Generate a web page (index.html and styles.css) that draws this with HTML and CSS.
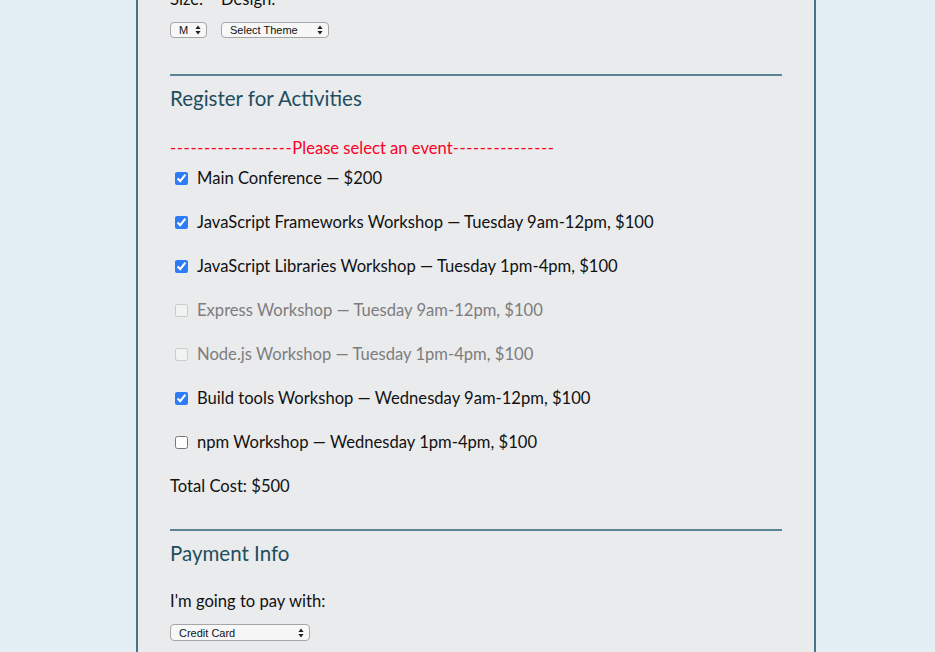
FILE: index.html
```html
<!DOCTYPE html>
<html lang="en">
<head>
<meta charset="utf-8">
<title>Register</title>
<link rel="stylesheet" href="styles.css">
</head>
<body>
<form class="form">
  <div class="shirt">
    <div class="shirt-labels">
      <span class="lbl lbl-size">Size:</span>
      <span class="lbl">Design:</span>
    </div>
    <div class="shirt-selects">
      <span class="sel sel-size">
        <select class="select"><option>M</option></select>
        <svg class="arrows" width="6" height="10" viewBox="0 0 6 10"><path d="M3 0.5 L5.6 4 H0.4 Z M3 9.5 L5.6 6 H0.4 Z" fill="#222"/></svg>
      </span>
      <span class="sel sel-theme">
        <select class="select"><option>Select Theme</option></select>
        <svg class="arrows" width="6" height="10" viewBox="0 0 6 10"><path d="M3 0.5 L5.6 4 H0.4 Z M3 9.5 L5.6 6 H0.4 Z" fill="#222"/></svg>
      </span>
    </div>
  </div>

  <section class="section">
    <h2 class="legend">Register for Activities</h2>
    <p class="error"><span class="dashes">------------------</span>Please select an event<span class="dashes">---------------</span></p>
    <label class="act"><input type="checkbox" checked><span>Main Conference — $200</span></label>
    <label class="act"><input type="checkbox" checked><span>JavaScript Frameworks Workshop — Tuesday 9am-12pm, $100</span></label>
    <label class="act"><input type="checkbox" checked><span>JavaScript Libraries Workshop — Tuesday 1pm-4pm, $100</span></label>
    <label class="act act-disabled"><input type="checkbox" disabled><span>Express Workshop — Tuesday 9am-12pm, $100</span></label>
    <label class="act act-disabled"><input type="checkbox" disabled><span>Node.js Workshop — Tuesday 1pm-4pm, $100</span></label>
    <label class="act"><input type="checkbox" checked><span>Build tools Workshop — Wednesday 9am-12pm, $100</span></label>
    <label class="act"><input type="checkbox"><span>npm Workshop — Wednesday 1pm-4pm, $100</span></label>
    <p class="total">Total Cost: $500</p>
  </section>

  <section class="section">
    <h2 class="legend">Payment Info</h2>
    <p class="pay-label">I'm going to pay with:</p>
    <span class="sel sel-pay">
      <select class="select"><option>Credit Card</option></select>
      <svg class="arrows" width="6" height="10" viewBox="0 0 6 10"><path d="M3 0.5 L5.6 4 H0.4 Z M3 9.5 L5.6 6 H0.4 Z" fill="#222"/></svg>
    </span>
  </section>
</form>
</body>
</html>
```
FILE: styles.css
```css
html, body {
  margin: 0;
  padding: 0;
  background: #e3eff5;
  height: 100%;
  overflow: hidden;
}

body {
  font-family: "Lato", "Noto Sans", sans-serif;
  font-size: 16.6px;
  color: #111;
}

.form {
  width: 612px;
  margin: -11px 0 0 136px;
  padding: 0 32px 40px;
  background: #eaebed;
  border-left: 2px solid #477585;
  border-right: 2px solid #477585;
  min-height: 700px;
}

.shirt-labels {
  display: flex;
  line-height: 20px;
  height: 20px;
}

.lbl-size {
  width: 51px;
}

.shirt-selects {
  display: flex;
  gap: 14px;
  margin-top: 13px;
  height: 16px;
}

.sel {
  position: relative;
  display: inline-block;
}

.select {
  appearance: none;
  -webkit-appearance: none;
  display: block;
  box-sizing: border-box;
  height: 16px;
  margin: 0;
  padding: 0 0 0 8px;
  border: 1px solid #a6a6a6;
  border-radius: 4px;
  background: #f7f7f7;
  font-family: "Liberation Sans", Arial, sans-serif;
  font-size: 11px;
  line-height: 14px;
  color: #111;
}

.sel-size .select { width: 37px; }
.sel-theme .select { width: 108px; }
.sel-pay .select { width: 140px; height: 17px; }

.arrows {
  position: absolute;
  right: 6px;
  top: 3px;
  pointer-events: none;
}

.sel-pay .arrows { top: 4px; }

.section {
  border-top: 2px solid #5b8595;
}

.shirt + .section {
  margin-top: 36px;
}

.legend {
  margin: 10px 0 0;
  font-size: 20.5px;
  line-height: 24px;
  font-weight: 400;
  color: #1f4e5d;
}

.error {
  margin: 28px 0 0;
  line-height: 20px;
  color: #fa0026;
}

.dashes {
  letter-spacing: 0.63px;
}

.act {
  display: flex;
  align-items: center;
  height: 20px;
  line-height: 20px;
  margin-top: 24px;
}

.error + .act {
  margin-top: 10px;
}

.act input {
  width: 13px;
  height: 13px;
  margin: 0 9px 0 5px;
  accent-color: #2c7cf6;
}

.act-disabled {
  color: #7d7d7d;
}

.total {
  margin: 24px 0 0;
  line-height: 20px;
}

.section + .section {
  margin-top: 33px;
}

.pay-label {
  margin: 26px 0 0;
  line-height: 20px;
}

.sel-pay {
  margin-top: 13px;
}
```
